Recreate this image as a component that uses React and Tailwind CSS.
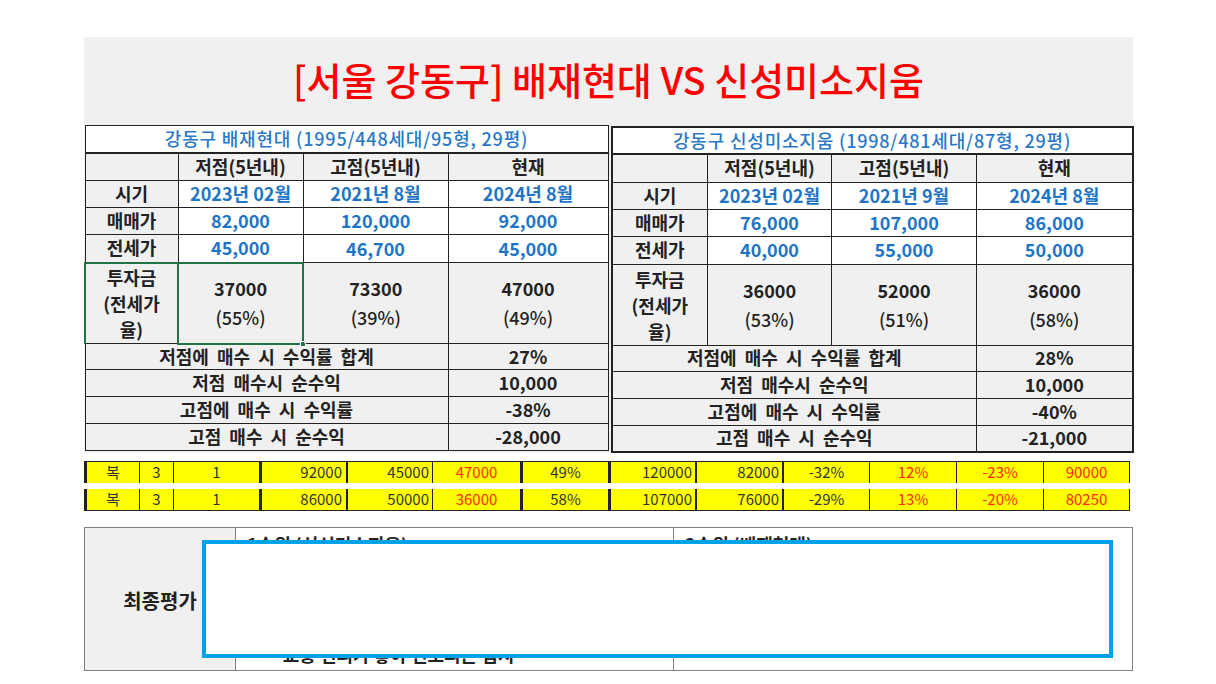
import React from 'react';

const left = {
  title: '강동구 배재현대 (1995/448세대/95형, 29평)',
  cols: [93, 125, 145, 160],
  periods: ['2023년 02월', '2021년 8월', '2024년 8월'],
  sale: ['82,000', '120,000', '92,000'],
  jeonse: ['45,000', '46,700', '45,000'],
  invest: [['37000', '(55%)'], ['73300', '(39%)'], ['47000', '(49%)']],
  summary: [
    ['저점에 매수 시 수익률 합계', '27%'],
    ['저점 매수시 순수익', '10,000'],
    ['고점에 매수 시 수익률', '-38%'],
    ['고점 매수 시 순수익', '-28,000'],
  ],
};

const right = {
  title: '강동구 신성미소지움 (1998/481세대/87형, 29평)',
  cols: [96, 124, 145, 156],
  periods: ['2023년 02월', '2021년 9월', '2024년 8월'],
  sale: ['76,000', '107,000', '86,000'],
  jeonse: ['40,000', '55,000', '50,000'],
  invest: [['36000', '(53%)'], ['52000', '(51%)'], ['36000', '(58%)']],
  summary: [
    ['저점에 매수 시 수익률 합계', '28%'],
    ['저점 매수시 순수익', '10,000'],
    ['고점에 매수 시 수익률', '-40%'],
    ['고점 매수 시 순수익', '-21,000'],
  ],
};

const cell = 'border border-[#222] text-center align-middle';
const label = `${cell} bg-[#f0f0f0] font-bold text-[#222]`;
const blue = `${cell} bg-white font-bold text-[#1e74c6]`;

function CompareTable({ data, selected, outline }) {
  const width = data.cols.reduce((a, b) => a + b, 0);
  return (
    <table
      className={`border-collapse table-fixed text-[18px] leading-[1.2] ${outline}`}
      style={{ width }}
    >
      <colgroup>
        {data.cols.map((w, i) => (
          <col key={i} style={{ width: w }} />
        ))}
      </colgroup>
      <tbody>
        <tr className="h-[27px]">
          <td
            colSpan={4}
            className={`${cell} bg-white font-medium tracking-[0.8px] text-[#2a78c8] border-b-2`}
          >
            {data.title}
          </td>
        </tr>
        <tr className="h-[28px]">
          <td className={label}></td>
          <td className={label}>저점(5년내)</td>
          <td className={label}>고점(5년내)</td>
          <td className={label}>현재</td>
        </tr>
        <tr className="h-[27px]">
          <td className={label}>시기</td>
          {data.periods.map((v, i) => (
            <td key={i} className={blue}>{v}</td>
          ))}
        </tr>
        <tr className="h-[27px]">
          <td className={label}>매매가</td>
          {data.sale.map((v, i) => (
            <td key={i} className={blue}>{v}</td>
          ))}
        </tr>
        <tr className="h-[28px]">
          <td className={label}>전세가</td>
          {data.jeonse.map((v, i) => (
            <td key={i} className={blue}>{v}</td>
          ))}
        </tr>
        <tr className="h-[81px]">
          <td
            className={`${label} leading-[26px] ${
              selected ? 'border-l-2 border-t-2 border-l-[#217346] border-t-[#217346]' : ''
            }`}
          >
            투자금
            <br />
            (전세가
            <br />
            율)
          </td>
          {data.invest.map(([n, p], i) => (
            <td
              key={i}
              className={`${cell} bg-[#f0f0f0] text-[#222] leading-[29px] relative ${
                selected && i === 0 ? 'border-2 border-[#217346]' : ''
              }`}
            >
              <div className="font-bold">{n}</div>
              <div className="font-medium">{p}</div>
              {selected && i === 0 && (
                <span className="absolute -right-[4px] -bottom-[4px] w-[6px] h-[6px] bg-[#217346] border border-white" />
              )}
            </td>
          ))}
        </tr>
        {data.summary.map(([t, v], i) => (
          <tr key={i} className={i === 0 ? 'h-[26px]' : 'h-[27px]'}>
            <td colSpan={3} className={`${label} [word-spacing:4px]`}>{t}</td>
            <td className={label}>{v}</td>
          </tr>
        ))}
      </tbody>
    </table>
  );
}

const yellowCells = (row) => [
  { w: 55, bl: 'border-l-[3px]', t: '복', a: 'justify-center' },
  { w: 34, bl: 'border-l', t: '3', a: 'justify-center' },
  { w: 86, bl: 'border-l', t: '1', a: 'justify-center' },
  { w: 87, bl: 'border-l-[3px]', t: row[0], a: 'justify-end pr-[4px]' },
  { w: 86, bl: 'border-l-2', t: row[1], a: 'justify-end pr-[3px]' },
  { w: 88, bl: 'border-l', t: row[2], a: 'justify-center', red: true },
  { w: 88, bl: 'border-l-[3px]', t: row[3], a: 'justify-center' },
  { w: 87, bl: 'border-l-[3px]', t: row[4], a: 'justify-end pr-[3px]' },
  { w: 87, bl: 'border-l-2', t: row[5], a: 'justify-end pr-[3px]' },
  { w: 87, bl: 'border-l-2', t: row[6], a: 'justify-center' },
  { w: 87, bl: 'border-l', t: row[7], a: 'justify-center', red: true },
  { w: 87, bl: 'border-l', t: row[8], a: 'justify-center', red: true },
  { w: 87, bl: 'border-l', t: row[9], a: 'justify-center', red: true },
];

function YellowRow({ row, edge }) {
  return (
    <div className={`flex h-[22px] bg-[#ffff00] border-[#222] ${edge}`}>
      {yellowCells(row).map((c, i) => (
        <div
          key={i}
          style={{ width: c.w }}
          className={`flex items-center ${c.a} ${c.bl} border-[#222] text-[15px] ${
            c.red ? 'text-[#ff2a00]' : 'text-[#333]'
          } ${i === 12 ? 'border-r' : ''}`}
        >
          {c.t}
        </div>
      ))}
    </div>
  );
}

export default function App() {
  return (
    <div className="min-h-[684px] bg-white pt-[37px] pl-[84px] font-['Noto_Sans_CJK_KR','Noto_Sans',sans-serif]">
      <div className="w-[1049px] bg-[#f0f0f0]">
        <div className="h-[88px] flex items-center justify-center pb-[6px] text-[38px] font-medium text-[#ff0000]">
          [서울 강동구] 배재현대 VS 신성미소지움
        </div>
        <div className="flex items-start gap-[2px]">
          <CompareTable data={left} selected outline="border border-[#777]" />
          <div className="mt-[1px]">
            <CompareTable data={right} outline="border-2 border-[#222]" />
          </div>
        </div>
      </div>

      <div className="mt-[8px] w-[1046px]">
        <YellowRow
          edge="border-t"
          row={['92000', '45000', '47000', '49%', '120000', '82000', '-32%', '12%', '-23%', '90000']}
        />
        <div className="h-[6px]" />
        <YellowRow
          edge="border-b"
          row={['86000', '50000', '36000', '58%', '107000', '76000', '-29%', '13%', '-20%', '80250']}
        />
      </div>

      <div className="relative mt-[16px] w-[1049px] h-[144px] flex border border-[#808080]">
        <div className="w-[150px] bg-[#f0f0f0] flex items-center justify-center text-[20px] font-bold text-[#222] pt-[4px]">
          최종평가
        </div>
        <div className="w-[438px] border-l border-[#808080] bg-white flex flex-col justify-between pt-[3px] pb-[2px] pl-[11px] text-[18px] font-bold text-[#222]">
          <div>1순위 (신성미소지움)</div>
          <div className="pl-[25px]">- 교통 편의가 좋아 선호되는 입지</div>
        </div>
        <div className="flex-1 border-l border-[#808080] bg-white pt-[3px] pl-[11px] text-[18px] font-bold text-[#222]">
          2순위 (배재현대)
        </div>
        <div className="absolute left-[117px] top-[12px] w-[911px] h-[118px] border-4 border-[#00a2e8] bg-white" />
      </div>
    </div>
  );
}
